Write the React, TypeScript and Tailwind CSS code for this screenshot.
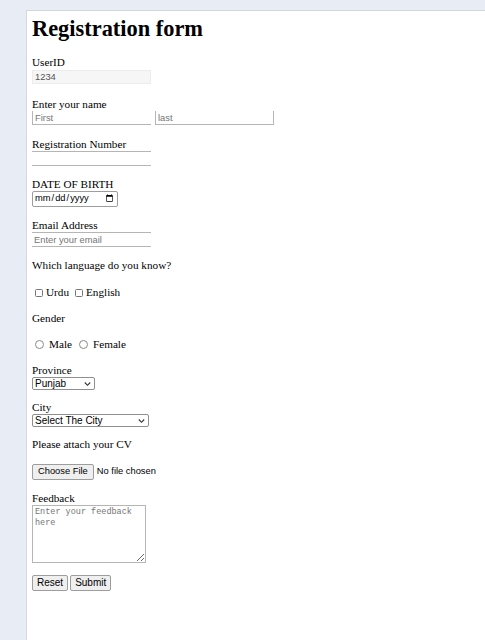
import * as React from 'react';

const labelCls = "block font-['Liberation_Serif',serif] text-[11.2px] leading-[13px] text-black";
const fieldCls = "font-['Liberation_Sans',Arial,sans-serif] text-[9.33px] placeholder:text-[#757575] outline-none";
const btnCls =
  "h-[16px] rounded-[2px] border border-[#9d9d9d] bg-[#efefef] px-[4px] font-['Liberation_Sans',Arial,sans-serif] text-[10px] leading-none text-black";

const Chevron: React.FC = () => (
  <svg
    className="pointer-events-none absolute right-[4px] top-1/2 -translate-y-1/2"
    width="7"
    height="5"
    viewBox="0 0 7 5"
    fill="none"
  >
    <path d="M0.8 1 L3.5 3.8 L6.2 1" stroke="#333" strokeWidth="1.1" />
  </svg>
);

const Select: React.FC<{ id: string; width: string; options: string[] }> = ({ id, width, options }) => (
  <div className={`relative h-[13px] ${width}`}>
    <select
      id={id}
      className={`${fieldCls} block h-[13px] w-full appearance-none rounded-[2px] border border-[#8f8f8f] bg-white pl-[2px] text-[10px] leading-none text-black`}
    >
      {options.map((option) => (
        <option key={option}>{option}</option>
      ))}
    </select>
    <Chevron />
  </div>
);

const App: React.FC = () => {
  return (
    <div className="min-h-screen bg-[#e8edf5] pl-[26px] pt-[10px]">
      <form className="flex min-h-[630px] flex-col items-start border-l border-t border-[#d3d7de] bg-white pl-[5px]">
        <h1 className="mt-[5px] font-['Liberation_Serif',serif] text-[22.4px] font-bold leading-[26px] text-black">
          Registration form
        </h1>

        <label className={`${labelCls} mt-[14px]`} htmlFor="userid">
          UserID
        </label>
        <input
          id="userid"
          className={`${fieldCls} mt-[1px] h-[14px] w-[119px] border border-[#ececec] bg-[#f6f6f6] px-[2px] text-[#545454]`}
          type="text"
          defaultValue="1234"
          readOnly
        />

        <label className={`${labelCls} mt-[14px]`} htmlFor="first">
          Enter your name
        </label>
        <div className="flex gap-[4px]">
          <input
            id="first"
            className={`${fieldCls} h-[14px] w-[119px] border-b border-l border-[#b5b5b5] px-[2px] text-black`}
            type="text"
            placeholder="First"
          />
          <input
            className={`${fieldCls} h-[14px] w-[119px] border-b border-l border-r border-[#b5b5b5] px-[2px] text-black`}
            type="text"
            placeholder="last"
          />
        </div>

        <label className={`${labelCls} mt-[13px]`} htmlFor="regno">
          Registration Number
        </label>
        <input
          id="regno"
          className={`${fieldCls} h-[15px] w-[119px] border-b border-t border-[#b5b5b5] px-[2px] text-black`}
          type="text"
        />

        <label className={`${labelCls} mt-[12px]`} htmlFor="dob">
          DATE OF BIRTH
        </label>
        <input
          id="dob"
          className={`${fieldCls} h-[16px] w-[86px] rounded-[2px] border border-[#9d9d9d] px-[1px] text-black`}
          type="date"
        />

        <label className={`${labelCls} mt-[12px]`} htmlFor="email">
          Email Address
        </label>
        <input
          id="email"
          className={`${fieldCls} h-[15px] w-[119px] border-b border-t border-[#b5b5b5] px-[2px] text-black`}
          type="email"
          placeholder="Enter your email"
        />

        <p className={`${labelCls} mt-[12px]`}>Which language do you know?</p>
        <div className={`${labelCls} mt-[14px] flex h-[13px] items-center`}>
          <input
            className="ml-[3px] h-[8px] w-[8px] appearance-none rounded-[1.5px] border border-[#767676] bg-white"
            type="checkbox"
            id="urdu"
          />
          <label className="ml-[3px]" htmlFor="urdu">
            Urdu
          </label>
          <input
            className="ml-[6px] h-[8px] w-[8px] appearance-none rounded-[1.5px] border border-[#767676] bg-white"
            type="checkbox"
            id="english"
          />
          <label className="ml-[3px]" htmlFor="english">
            English
          </label>
        </div>

        <p className={`${labelCls} mt-[13px]`}>Gender</p>
        <div className={`${labelCls} mt-[13px] flex h-[13px] items-center`}>
          <input
            className="ml-[3px] h-[9px] w-[9px] appearance-none rounded-full border border-[#8a8a8a] bg-white"
            type="radio"
            name="gender"
            id="male"
          />
          <label className="ml-[5px]" htmlFor="male">
            Male
          </label>
          <input
            className="ml-[7px] h-[9px] w-[9px] appearance-none rounded-full border border-[#8a8a8a] bg-white"
            type="radio"
            name="gender"
            id="female"
          />
          <label className="ml-[5px]" htmlFor="female">
            Female
          </label>
        </div>

        <label className={`${labelCls} mt-[13px]`} htmlFor="province">
          Province
        </label>
        <Select id="province" width="w-[63px]" options={['Punjab', 'Sindh', 'KPK', 'Balochistan']} />

        <label className={`${labelCls} mt-[11px]`} htmlFor="city">
          City
        </label>
        <Select id="city" width="w-[117px]" options={['Select The City', 'Lahore', 'Karachi', 'Islamabad']} />

        <p className={`${labelCls} mt-[11px]`}>Please attach your CV</p>
        <input
          className={`${fieldCls} mt-[13px] h-[16px] w-[160px] text-[9.6px] text-black file:mr-[3px] file:h-[16px] file:rounded-[2px] file:border file:border-[#9d9d9d] file:bg-[#efefef] file:px-[5px] file:text-black`}
          type="file"
        />

        <label className={`${labelCls} mt-[12px]`} htmlFor="feedback">
          Feedback
        </label>
        <textarea
          id="feedback"
          className="h-[58px] w-[114px] border border-[#b5b5b5] px-[2px] py-[1px] font-['Liberation_Mono',monospace] text-[8.5px] leading-[11px] text-black outline-none placeholder:text-[#757575]"
          placeholder="Enter your feedback here"
        />

        <div className="mt-[12px] flex gap-[2px]">
          <button className={btnCls} type="reset">
            Reset
          </button>
          <button className={btnCls} type="button">
            Submit
          </button>
        </div>
      </form>
    </div>
  );
};

export default App;
